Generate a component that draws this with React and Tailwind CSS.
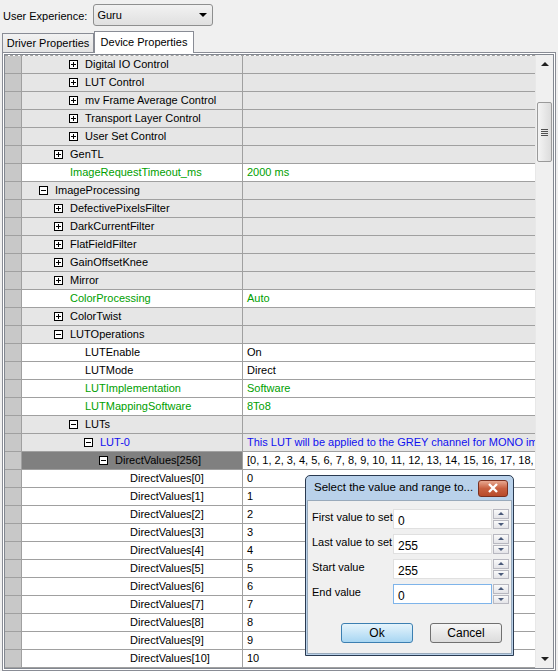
import React from "react";

const G = "#00a000";
const B = "#1010f0";

const rows = [
  { l: 3, name: "Digital IO Control", box: "+" },
  { l: 3, name: "LUT Control", box: "+" },
  { l: 3, name: "mv Frame Average Control", box: "+" },
  { l: 3, name: "Transport Layer Control", box: "+" },
  { l: 3, name: "User Set Control", box: "+" },
  { l: 2, name: "GenTL", box: "+" },
  { l: 2, name: "ImageRequestTimeout_ms", value: "2000 ms", color: G },
  { l: 1, name: "ImageProcessing", box: "-" },
  { l: 2, name: "DefectivePixelsFilter", box: "+" },
  { l: 2, name: "DarkCurrentFilter", box: "+" },
  { l: 2, name: "FlatFieldFilter", box: "+" },
  { l: 2, name: "GainOffsetKnee", box: "+" },
  { l: 2, name: "Mirror", box: "+" },
  { l: 2, name: "ColorProcessing", value: "Auto", color: G },
  { l: 2, name: "ColorTwist", box: "+" },
  { l: 2, name: "LUTOperations", box: "-" },
  { l: 3, name: "LUTEnable", value: "On" },
  { l: 3, name: "LUTMode", value: "Direct" },
  { l: 3, name: "LUTImplementation", value: "Software", color: G },
  { l: 3, name: "LUTMappingSoftware", value: "8To8", color: G },
  { l: 3, name: "LUTs", box: "-" },
  {
    l: 4,
    name: "LUT-0",
    box: "-",
    color: B,
    value: "This LUT will be applied to the GREY channel for MONO images",
  },
  {
    l: 5,
    name: "DirectValues[256]",
    box: "-",
    selected: true,
    value:
      "[0, 1, 2, 3, 4, 5, 6, 7, 8, 9, 10, 11, 12, 13, 14, 15, 16, 17, 18, 19, 20]",
  },
  ...Array.from({ length: 11 }, (_, i) => ({
    l: 6,
    name: `DirectValues[${i}]`,
    value: String(i),
  })),
];

function Box({ kind }) {
  return (
    <svg width="9" height="9" viewBox="0 0 9 9" className="shrink-0">
      <rect x="0.5" y="0.5" width="8" height="8" fill="#fff" stroke="#000" />
      <line x1="2" y1="4.5" x2="7" y2="4.5" stroke="#000" />
      {kind === "+" && <line x1="4.5" y1="2" x2="4.5" y2="7" stroke="#000" />}
    </svg>
  );
}

function Row({ row }) {
  const group = !!row.box;
  const bg = group ? "bg-[#e6e6e6]" : "bg-white";
  const nameBg = row.selected ? "bg-[#808080]" : bg;
  const valueBg = row.selected ? "bg-white" : bg;
  const pad = group ? 2 + 15 * row.l : 18 + 15 * row.l;
  return (
    <div className="flex h-[18px] border-b border-[#a0a0a0]">
      <div className="w-[17px] shrink-0 border-r border-[#a0a0a0] bg-[#c8c8c8]" />
      <div
        className={`flex w-[221px] shrink-0 items-center gap-[7px] border-r border-[#a0a0a0] ${nameBg}`}
        style={{ paddingLeft: pad, color: row.color || "#000" }}
      >
        {group && <Box kind={row.box} />}
        <span className="whitespace-nowrap">{row.name}</span>
      </div>
      <div
        className={`flex min-w-0 flex-1 items-center overflow-hidden whitespace-nowrap pl-[4px] ${valueBg}`}
        style={{ color: row.color || "#000" }}
      >
        {row.value}
      </div>
    </div>
  );
}

function Spinner() {
  return (
    <div className="ml-[1px] flex h-[20px] w-[16px] shrink-0 flex-col gap-[1px]">
      <div className="flex flex-1 items-center justify-center border border-[#b8b8c0] bg-gradient-to-b from-[#fafafa] to-[#e4e4e8]">
        <span className="h-0 w-0 border-x-[3px] border-b-[3px] border-x-transparent border-b-[#4a5a7a]" />
      </div>
      <div className="flex flex-1 items-center justify-center border border-[#b8b8c0] bg-gradient-to-b from-[#fafafa] to-[#e4e4e8]">
        <span className="h-0 w-0 border-x-[3px] border-t-[3px] border-x-transparent border-t-[#4a5a7a]" />
      </div>
    </div>
  );
}

function Field({ label, value, focus }) {
  return (
    <div className="flex h-[20px] items-start">
      <div className="w-[81px] shrink-0 text-[11px] leading-[16px] whitespace-nowrap">{label}</div>
      <div
        className={`flex h-[20px] w-[99px] shrink-0 items-center bg-white pl-[4px] pt-[3px] text-[12px] ${
          focus ? "border border-[#7eb4ea]" : "border border-[#e0e0e0]"
        }`}
      >
        {value}
      </div>
      <Spinner />
    </div>
  );
}

function Dialog() {
  return (
    <div className="absolute left-[305px] top-[475px] flex h-[181px] w-[209px] flex-col rounded-t-[5px] border border-[#2a3a50] bg-[#b9d1ea] px-[1px] pb-[1px]">
      <div className="flex h-[24px] items-center justify-between pl-[7px] pr-[4px]">
        <span className="text-[11.5px] text-black">Select the value and range to...</span>
        <div className="flex h-[17px] w-[30px] items-center justify-center rounded-[3px] border border-[#7a3020] bg-gradient-to-b from-[#e8a890] via-[#c86040] to-[#b84a2a]">
          <svg width="12" height="10" viewBox="0 0 12 10">
            <path d="M2 1 L10 9 M10 1 L2 9" stroke="#fff" strokeWidth="2.4" />
          </svg>
        </div>
      </div>
      <div className="flex flex-1 flex-col border border-[#9ab] bg-[#f0f0f0] pl-[4px] pt-[8px]">
        <div className="flex flex-col gap-[5px]">
          <Field label="First value to set" value="0" />
          <Field label="Last value to set" value="255" />
          <Field label="Start value" value="255" />
          <Field label="End value" value="0" focus />
        </div>
        <div className="mt-[19px] flex gap-[17px] pl-[29px]">
          <button className="h-[20px] w-[72px] rounded-[3px] border border-[#3c7fb1] bg-gradient-to-b from-[#e5f4fc] to-[#a8d6f2] text-[12px]">
            Ok
          </button>
          <button className="h-[20px] w-[72px] rounded-[3px] border border-[#707070] bg-gradient-to-b from-[#f6f6f6] to-[#dcdcdc] text-[12px]">
            Cancel
          </button>
        </div>
      </div>
    </div>
  );
}

function Scrollbar() {
  return (
    <div className="flex w-[18px] shrink-0 flex-col items-center border-l border-[#e8e8e8] bg-[#f0f0f0]">
      <div className="flex h-[18px] w-full items-center justify-center">
        <span className="h-0 w-0 border-x-[4px] border-b-[4px] border-x-transparent border-b-[#202020]" />
      </div>
      <div className="mt-[29px] flex h-[60px] w-[15px] items-center justify-center rounded-[2px] border border-[#9a9a9a] bg-gradient-to-r from-[#f4f4f4] to-[#dcdcdc]">
        <div className="flex flex-col gap-[1px]">
          <div className="h-[1px] w-[7px] bg-[#505050]" />
          <div className="h-[1px] w-[7px] bg-[#505050]" />
          <div className="h-[1px] w-[7px] bg-[#505050]" />
          <div className="h-[1px] w-[7px] bg-[#505050]" />
        </div>
      </div>
      <div className="flex-1" />
      <div className="flex h-[18px] w-full items-center justify-center">
        <span className="h-0 w-0 border-x-[4px] border-t-[4px] border-x-transparent border-t-[#202020]" />
      </div>
    </div>
  );
}

export default function App() {
  return (
    <div
      className="relative h-[671px] w-[558px] overflow-hidden bg-[#f0f0f0] text-[11px] text-black"
      style={{ fontFamily: '"Liberation Sans", Arial, sans-serif' }}
    >
      {/* top bar */}
      <div className="flex h-[31px] items-start pl-[3px] pt-[4px]">
        <span className="mt-[4px] mr-[6px]">User Experience:</span>
        <div className="flex h-[22px] w-[120px] items-center justify-between rounded-[3px] border border-[#8e8f8f] bg-gradient-to-b from-[#f2f2f2] to-[#e0e0e0] pl-[3px] pr-[5px]">
          <span>Guru</span>
          <span className="h-0 w-0 border-x-[4px] border-t-[4px] border-x-transparent border-t-[#000]" />
        </div>
      </div>

      {/* tabs */}
      <div className="flex h-[21px] items-end pl-[2px]">
        <div className="flex h-[19px] w-[92px] items-center justify-center border border-b-0 border-[#898c95] bg-gradient-to-b from-[#f2f2f2] to-[#e3e3e3]">
          Driver Properties
        </div>
        <div className="relative z-10 -mb-[1px] flex h-[22px] w-[100px] items-start justify-center border border-b-0 border-[#898c95] bg-white pt-[2px]">
          Device Properties
        </div>
      </div>

      {/* property grid */}
      <div className="ml-[2px] w-[554px] border border-[#898c95] bg-white p-[1px]">
        <div className="flex border border-[#828790]">
          <div className="min-w-0 flex-1 border-t border-dashed border-[#a0a0a0]">
            {rows.map((row, i) => (
              <Row key={i} row={row} />
            ))}
          </div>
          <Scrollbar />
        </div>
      </div>

      <Dialog />
    </div>
  );
}
